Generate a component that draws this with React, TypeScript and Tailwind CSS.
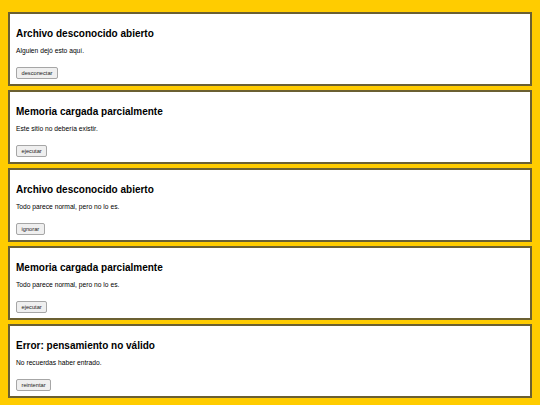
const cards = [
  {
    title: "Archivo desconocido abierto",
    text: "Alguien dejó esto aquí.",
    action: "desconectar"
  },
  {
    title: "Memoria cargada parcialmente",
    text: "Este sitio no debería existir.",
    action: "ejecutar"
  },
  {
    title: "Archivo desconocido abierto",
    text: "Todo parece normal, pero no lo es.",
    action: "ignorar"
  },
  {
    title: "Memoria cargada parcialmente",
    text: "Todo parece normal, pero no lo es.",
    action: "ejecutar"
  },
  {
    title: "Error: pensamiento no válido",
    text: "No recuerdas haber entrado.",
    action: "reintentar"
  }
];

const App = () => {
  return (
    <div className="flex min-h-[405px] flex-col gap-[4px] bg-[#ffcc00] px-[8px] pt-[12px] font-['Liberation_Sans',Arial,sans-serif] text-black">
      {cards.map((card, i) => (
        <div
          key={i}
          className="flex h-[74px] flex-col items-start border-2 border-[#6b6032] bg-white px-[6px] pt-[14px]"
        >
          <h2 className="text-[10px] font-bold leading-[12px]">{card.title}</h2>
          <p className="mt-[7px] text-[6.7px] leading-[8px]">{card.text}</p>
          <button className="mt-[12px] flex h-[12px] items-center rounded-[2px] border border-[#a6a6a6] bg-[#efefef] px-[4.5px] text-[5.7px] leading-[8px] text-[#222]">
            {card.action}
          </button>
        </div>
      ))}
    </div>
  );
};

export default App;
